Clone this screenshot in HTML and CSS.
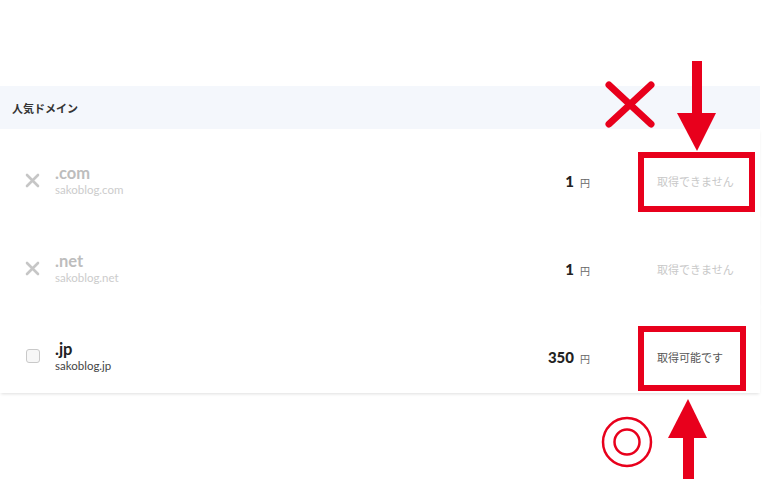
FILE: index.html
```html
<!DOCTYPE html>
<html lang="ja">
<head>
<meta charset="utf-8">
<title>人気ドメイン</title>
<link rel="stylesheet" href="styles.css">
</head>
<body>
<main class="page">
  <section class="domains">
    <div class="domains-head">人気ドメイン</div>
    <div class="row is-disabled">
      <span class="mark">
        <svg width="15" height="15" viewBox="0 0 15 15"><path d="M2 2 L13 13 M13 2 L2 13" stroke="#c6c6c6" stroke-width="2.6" stroke-linecap="round" fill="none"/></svg>
      </span>
      <div class="name">
        <div class="tld">.com</div>
        <div class="full">sakoblog.com</div>
      </div>
      <div class="price"><b>1</b><span class="yen">円</span></div>
      <div class="status">取得できません</div>
    </div>
    <div class="row is-disabled">
      <span class="mark">
        <svg width="15" height="15" viewBox="0 0 15 15"><path d="M2 2 L13 13 M13 2 L2 13" stroke="#c6c6c6" stroke-width="2.6" stroke-linecap="round" fill="none"/></svg>
      </span>
      <div class="name">
        <div class="tld">.net</div>
        <div class="full">sakoblog.net</div>
      </div>
      <div class="price"><b>1</b><span class="yen">円</span></div>
      <div class="status">取得できません</div>
    </div>
    <div class="row">
      <span class="mark"><span class="checkbox"></span></span>
      <div class="name">
        <div class="tld">.jp</div>
        <div class="full">sakoblog.jp</div>
      </div>
      <div class="price"><b>350</b><span class="yen">円</span></div>
      <div class="status">取得可能です</div>
    </div>
  </section>
  <svg class="annot" width="768" height="479" viewBox="0 0 768 479">
    <g stroke="#e8001c" stroke-width="7" stroke-linecap="round">
      <line x1="609" y1="85" x2="651" y2="124"/>
      <line x1="651" y1="85" x2="609" y2="124"/>
    </g>
    <rect x="692" y="61" width="10" height="56" fill="#e8001c"/>
    <polygon points="677,113 716,113 697,151" fill="#e8001c"/>
    <rect x="641" y="155" width="111" height="54" fill="none" stroke="#e8001c" stroke-width="6"/>
    <rect x="641" y="329" width="102" height="59" fill="none" stroke="#e8001c" stroke-width="6"/>
    <polygon points="688,399 668,438 707,438" fill="#e8001c"/>
    <rect x="683" y="436" width="11" height="43" fill="#e8001c"/>
    <circle cx="627" cy="442" r="24" fill="none" stroke="#e8001c" stroke-width="2.5"/>
    <circle cx="627" cy="442" r="12.5" fill="none" stroke="#e8001c" stroke-width="2.5"/>
  </svg>
</main>
</body>
</html>
```
FILE: styles.css
```css
* { box-sizing: border-box; }
html, body { margin: 0; padding: 0; background: #ffffff; }
body {
  font-family: "Lato", "Noto Sans CJK JP", sans-serif;
  color: #333;
  width: 768px;
  height: 479px;
  overflow: hidden;
}
.page {
  position: relative;
  width: 768px;
  height: 479px;
  padding-top: 86px;
}
.domains {
  width: 760px;
}
.domains-head {
  height: 43px;
  background: #f4f7fc;
  display: flex;
  align-items: center;
  padding-left: 12px;
  font-family: "Noto Sans CJK JP", sans-serif;
  font-size: 11px;
  font-weight: 700;
  color: #333;
  padding-top: 1px;
}
.row {
  height: 88px;
  display: flex;
  align-items: center;
  padding-top: 16px;
  padding-bottom: 2px;
  background: #fff;
  box-shadow: 0 2px 3px -1px rgba(0, 0, 0, 0.13);
}
.mark {
  width: 15px;
  height: 15px;
  margin-left: 25px;
  margin-right: 15px;
  display: flex;
  align-items: center;
  justify-content: center;
}
.checkbox {
  width: 14px;
  height: 14px;
  border: 1px solid #c9c9c9;
  border-radius: 3px;
  background: #f7f7f7;
}
.name {
  flex: 1;
  display: flex;
  flex-direction: column;
  gap: 3px;
}
.tld {
  font-size: 16.5px;
  font-weight: 700;
  line-height: 16px;
  color: #222;
}
.full {
  font-size: 11.5px;
  line-height: 12px;
  color: #444;
}
.is-disabled .tld { color: #bdbdbd; }
.is-disabled .full { color: #cccccc; }
.price {
  width: 100px;
  display: flex;
  justify-content: flex-end;
  align-items: baseline;
  padding-top: 2px;
  padding-right: 2px;
}
.price b {
  font-size: 15px;
  font-weight: 900;
  color: #222;
}
.yen {
  font-family: "Noto Sans CJK JP", sans-serif;
  font-size: 10px;
  color: #666;
  margin-left: 6px;
}
.status {
  width: 168px;
  padding-left: 65px;
  font-family: "Noto Sans CJK JP", sans-serif;
  font-size: 11px;
  color: #555;
  padding-top: 2px;
}
.is-disabled .status { color: #c8c8c8; }
.annot {
  position: absolute;
  left: 0;
  top: 0;
  pointer-events: none;
}
```
